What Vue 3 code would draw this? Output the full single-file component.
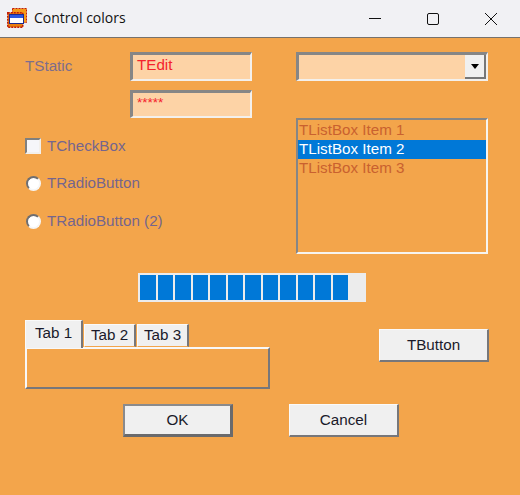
<template>
  <div class="dialog">
    <div class="titlebar">
      <svg class="appicon" width="20" height="20" viewBox="0 0 20 20">
        <rect x="5.5" y="0.5" width="14" height="14" fill="#f59a18" stroke="#c01c08" stroke-dasharray="2 1" />
        <rect x="0.75" y="4.75" width="15" height="14.5" fill="#ea7f10" stroke="#c01c08" stroke-width="1.5" stroke-dasharray="2 1" />
        <rect x="2.5" y="6.5" width="14" height="9" fill="#fff" stroke="#1c2a90" />
        <rect x="3" y="7" width="13" height="3" fill="#2c58e0" />
      </svg>
      <span class="title">Control colors</span>
      <div class="winbtns">
        <div class="winbtn">
          <svg width="14" height="14" viewBox="0 0 14 14"><path d="M1 6.5h12" stroke="#111" fill="none" /></svg>
        </div>
        <div class="winbtn">
          <svg width="14" height="14" viewBox="0 0 14 14"><rect x="1.5" y="1.5" width="11" height="11" rx="1.5" stroke="#111" fill="none" /></svg>
        </div>
        <div class="winbtn">
          <svg width="14" height="14" viewBox="0 0 14 14"><path d="M1 1l12 12M13 1L1 13" stroke="#111" fill="none" /></svg>
        </div>
      </div>
    </div>

    <div class="content">
      <div class="top">
        <div class="left">
          <div class="row">
            <span class="static">TStatic</span>
            <div class="edit">TEdit</div>
          </div>
          <div class="edit pass">*****</div>
          <label class="check"><span class="box"></span><span class="caption">TCheckBox</span></label>
          <label v-for="r in radios" :key="r" class="radio"><span class="dot"></span><span class="caption">{{ r }}</span></label>
        </div>
        <div class="right">
          <div class="combo">
            <div class="drop"><span class="arrow"></span></div>
          </div>
          <div class="list">
            <div v-for="(item, i) in items" :key="item" class="item" :class="{ selected: i === 1 }">{{ item }}</div>
          </div>
        </div>
      </div>

      <div class="progress">
        <div v-for="n in 12" :key="n" class="seg"></div>
      </div>

      <div class="middle">
        <div class="tabs">
          <div class="tabstrip">
            <div v-for="(t, i) in tabs" :key="t" class="tab" :class="{ active: i === 0 }">{{ t }}</div>
          </div>
          <div class="panel"></div>
        </div>
        <button class="btn tbutton">TButton</button>
      </div>

      <div class="footer">
        <button class="btn default">OK</button>
        <button class="btn">Cancel</button>
      </div>
    </div>
  </div>
</template>

<script setup>
const radios = ['TRadioButton', 'TRadioButton (2)'];
const items = ['TListBox Item 1', 'TListBox Item 2', 'TListBox Item 3'];
const tabs = ['Tab 1', 'Tab 2', 'Tab 3'];
</script>

<style>
html,
body {
  margin: 0;
  background: #f3a54b;
}
</style>

<style scoped>
.dialog {
  width: 520px;
  height: 495px;
  overflow: hidden;
  background: #f3a54b;
  font-family: 'Liberation Sans', Arial, sans-serif;
  font-size: 15.2px;
}

.titlebar {
  height: 37px;
  display: flex;
  align-items: center;
  background: #f1f1f4;
  border-bottom: 1px solid #77726c;
}
.appicon {
  margin-left: 7px;
  margin-top: -1px;
}
.title {
  margin: -2px 0 0 7px;
  font-family: 'Open Sans', 'Noto Sans', sans-serif;
  font-size: 14px;
  color: #111;
}
.winbtns {
  margin-left: auto;
  display: flex;
}
.winbtn {
  width: 58px;
  display: flex;
  justify-content: center;
}

.content {
  padding: 14px 0 0 25px;
}
.top {
  display: flex;
}
.left {
  width: 271px;
}
.row {
  display: flex;
  align-items: center;
}
.static {
  width: 105px;
  margin-top: -2px;
  color: #7d6d8c;
}
.edit {
  box-sizing: border-box;
  width: 122px;
  height: 29px;
  padding: 1px 0 0 4px;
  background: #fdd3a6;
  color: #f4222c;
  border-style: solid;
  border-width: 3px 2px 2px 3px;
  border-color: #868686 #f3f0ec #f3f0ec #868686;
}
.pass {
  height: 28px;
  margin: 9px 0 0 105px;
  padding-top: 2px;
  font-size: 13.5px;
}
.check,
.radio {
  display: flex;
  align-items: center;
  color: #75658e;
}
.caption {
  margin-top: -2px;
}
.check {
  margin-top: 20px;
  height: 16px;
}
.radio {
  margin-top: 22px;
  height: 15px;
}
.radio:last-child {
  margin-top: 23px;
}
.box {
  box-sizing: border-box;
  width: 16px;
  height: 16px;
  margin-right: 6px;
  background: #f6f6fa;
  border-style: solid;
  border-width: 2px;
  border-color: #80807f #f3f0ec #f3f0ec #80807f;
}
.dot {
  box-sizing: border-box;
  width: 15px;
  height: 15px;
  margin: 0 6px 0 1px;
  border-radius: 50%;
  background: #fff;
  border: 2px solid;
  border-color: #6f6f72 #f6f6f6 #f6f6f6 #6f6f72;
}

.right {
  width: 192px;
}
.combo {
  box-sizing: border-box;
  height: 29px;
  display: flex;
  justify-content: flex-end;
  background: #fdd3a6;
  border-style: solid;
  border-width: 3px 2px 2px 3px;
  border-color: #868686 #f3f0ec #f3f0ec #868686;
}
.drop {
  width: 21px;
  display: flex;
  align-items: center;
  justify-content: center;
  background: #f0f0f0;
  border-right: 2px solid #777;
  border-bottom: 2px solid #777;
  box-sizing: border-box;
}
.arrow {
  width: 0;
  height: 0;
  border-style: solid;
  border-width: 5px 4.5px 0;
  border-color: #000 transparent transparent;
}
.list {
  box-sizing: border-box;
  height: 136px;
  margin-top: 37px;
  padding-top: 1px;
  border-style: solid;
  border-width: 2px;
  border-color: #868686 #f6f4f0 #f6f4f0 #868686;
}
.item {
  height: 19px;
  line-height: 17px;
  padding-left: 1px;
  color: #c9612f;
}
.item.selected {
  background: #0078d7;
  color: #fff;
}

.progress {
  box-sizing: border-box;
  width: 228px;
  height: 29px;
  margin: 19px 0 0 113px;
  padding: 2px;
  display: flex;
  gap: 2px;
  background: #ececec;
}
.seg {
  width: 15.5px;
  background: #0078d7;
}

.middle {
  display: flex;
  margin-top: 18px;
}
.tabs {
  width: 245px;
}
.tabstrip {
  display: flex;
  align-items: flex-end;
  height: 27px;
}
.tab {
  box-sizing: border-box;
  width: 52px;
  height: 23px;
  margin-right: 1px;
  text-align: center;
  line-height: 19px;
  background: #f0f0f0;
  color: #1a1a2a;
  border-style: solid;
  border-width: 1px 2px 1px 1px;
  border-color: #fafafa #77777a #f3a54b #fafafa;
}
.tab.active {
  width: 58px;
  height: 28px;
  line-height: 23px;
  margin-bottom: -1px;
  position: relative;
  border-bottom: 0;
}
.panel {
  box-sizing: border-box;
  height: 42px;
  border-style: solid;
  border-width: 2px;
  border-color: #f8f8f8 #77777a #77777a #f8f8f8;
}

.btn {
  box-sizing: border-box;
  width: 110px;
  height: 33px;
  padding: 0 0 2px;
  font: inherit;
  color: #1a1a2a;
  background: #f0f0f0;
  border-style: solid;
  border-width: 1px 2px 2px 1px;
  border-color: #fafafa #77777a #77777a #fafafa;
}
.tbutton {
  margin: 9px 0 0 109px;
}
.footer {
  display: flex;
  gap: 56px;
  margin: 15px 0 0 98px;
}
.default {
  border-width: 2px 3px 3px 2px;
  border-color: #8a8a8c #6a6a6c #6a6a6c #8a8a8c;
}
</style>
